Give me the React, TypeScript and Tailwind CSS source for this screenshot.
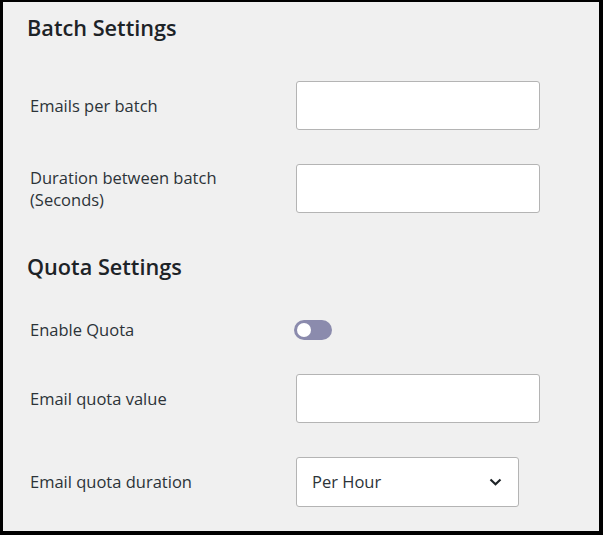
import { useState } from "react";

// ─── Sub-components ───────────────────────────────────────────────────────────

function Label({ children }: { children: React.ReactNode }) {
  return (
    <div className="w-[269px] shrink-0 pl-[3px] text-[16.5px] leading-[22px] text-[#2c3338]">
      {children}
    </div>
  );
}

function TextInput() {
  return (
    <input
      type="text"
      className="h-[49px] w-[244px] rounded-[3px] border border-[#b4b4b4] bg-white px-3 text-[16px] outline-none"
    />
  );
}

function Toggle() {
  const [on, setOn] = useState(false);
  return (
    <button
      type="button"
      onClick={() => setOn(!on)}
      className="relative -ml-[2px] h-[20px] w-[38px] rounded-full bg-[#8b8bad]"
      aria-pressed={on}
    >
      <span className="absolute left-[3px] top-[3px] h-[14px] w-[14px] rounded-full bg-white" />
    </button>
  );
}

function Select() {
  return (
    <div className="flex h-[50px] w-[223px] items-center justify-between rounded-[3px] border border-[#b4b4b4] bg-white pl-[15px] pr-[16px] text-[16.5px] text-[#2c3338]">
      <span>Per Hour</span>
      <svg width="13" height="8" viewBox="0 0 13 8" fill="none">
        <path d="M1.5 1.5 L6.5 6.2 L11.5 1.5" stroke="#1d2327" strokeWidth="2.2" />
      </svg>
    </div>
  );
}

// ─── Main App ─────────────────────────────────────────────────────────────────

export default function App() {
  return (
    <div
      className="h-[535px] w-[603px] border-b-[4px] border-l-[3px] border-r-[4px] border-t-[2px] border-black bg-[#f0f0f0]"
      style={{ fontFamily: '"Open Sans", "Noto Sans", sans-serif' }}
    >
      <div className="pl-[24px]">
        <h2 className="pt-[12px] text-[21.7px] font-semibold leading-[28px] text-[#1d2327]">
          Batch Settings
        </h2>

        <div className="mt-[39px] flex items-center">
          <Label>Emails per batch</Label>
          <TextInput />
        </div>

        <div className="mt-[34px] flex items-center">
          <Label>
            Duration between batch
            <br />
            (Seconds)
          </Label>
          <TextInput />
        </div>

        <h2 className="mt-[40px] text-[21.7px] font-semibold leading-[28px] text-[#1d2327]">
          Quota Settings
        </h2>

        <div className="mt-[38px] flex items-center">
          <Label>Enable Quota</Label>
          <Toggle />
        </div>

        <div className="mt-[33px] flex items-center">
          <Label>Email quota value</Label>
          <TextInput />
        </div>

        <div className="mt-[34px] flex items-center">
          <Label>Email quota duration</Label>
          <Select />
        </div>
      </div>
    </div>
  );
}
